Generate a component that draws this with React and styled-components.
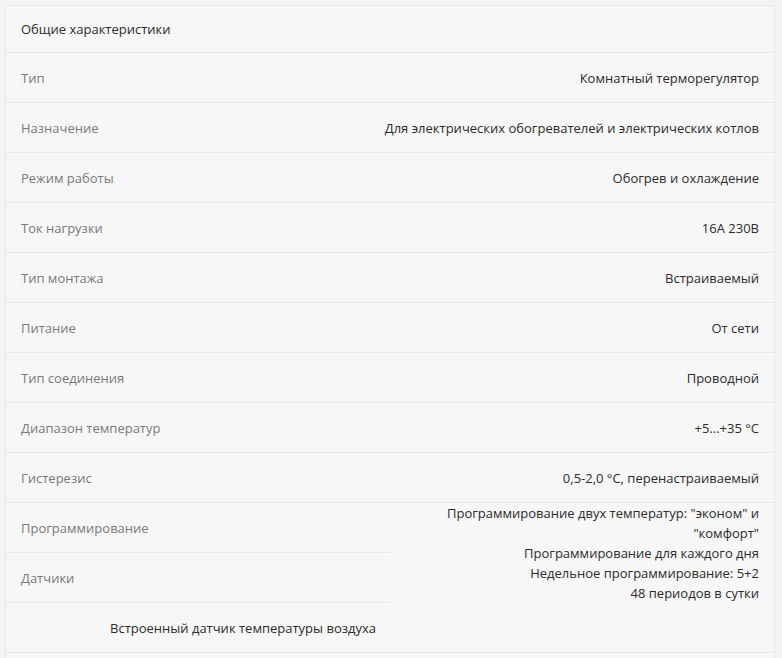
import React from 'react';
import styled, { createGlobalStyle } from 'styled-components';

const GlobalStyle = createGlobalStyle`
  body {
    margin: 0;
    background: #f4f4f4;
    font-family: "Open Sans", "Noto Sans", sans-serif;
    font-size: 13px;
    color: #333;
  }
`;

const Page = styled.div`
  padding: 5px 7px 0 5px;
`;

const Card = styled.section`
  background: #f7f7f7;
  border: 1px solid #e8e8e8;
  border-bottom: none;
`;

const Header = styled.h3`
  margin: 0;
  height: 46px;
  display: flex;
  align-items: center;
  padding: 0 15px;
  font-size: 13px;
  font-weight: 400;
  color: #2b2b2b;
  border-bottom: 1px solid #e8e8e8;
`;

const Row = styled.div`
  height: 49px;
  display: flex;
  align-items: center;
  justify-content: ${p => (p.$alignEnd ? 'flex-end' : 'space-between')};
  padding: 0 15px;
  border-bottom: 1px solid #e8e8e8;
`;

const Label = styled.span`
  color: #7a7a7a;
`;

const Value = styled.span`
  color: #2b2b2b;
  text-align: right;
`;

const Split = styled.div`
  display: grid;
  grid-template-columns: 385px 1fr;
  border-bottom: 1px solid #e8e8e8;
`;

const SplitRow = styled(Row)`
  &:last-child {
    border-bottom: none;
  }
`;

const ValueList = styled.ul`
  list-style: none;
  margin: 0;
  padding: 0 15px 0 0;
  justify-self: end;
  width: 322px;
  text-align: right;
  color: #2b2b2b;
  line-height: 20px;
`;

const specs = [
  ['Тип', 'Комнатный терморегулятор'],
  ['Назначение', 'Для электрических обогревателей и электрических котлов'],
  ['Режим работы', 'Обогрев и охлаждение'],
  ['Ток нагрузки', '16А 230В'],
  ['Тип монтажа', 'Встраиваемый'],
  ['Питание', 'От сети'],
  ['Тип соединения', 'Проводной'],
  ['Диапазон температур', '+5...+35 °С'],
  ['Гистерезис', '0,5-2,0 °С, перенастраиваемый'],
];

const programming = [
  'Программирование двух температур: "эконом" и "комфорт"',
  'Программирование для каждого дня',
  'Недельное программирование: 5+2',
  '48 периодов в сутки',
];

export default function App() {
  return (
    <Page>
      <GlobalStyle />
      <Card>
        <Header>Общие характеристики</Header>
        {specs.map(([label, value]) => (
          <Row key={label}>
            <Label>{label}</Label>
            <Value>{value}</Value>
          </Row>
        ))}
        <Split>
          <div>
            <SplitRow>
              <Label>Программирование</Label>
            </SplitRow>
            <SplitRow>
              <Label>Датчики</Label>
            </SplitRow>
            <SplitRow $alignEnd>
              <Value>Встроенный датчик температуры воздуха</Value>
            </SplitRow>
          </div>
          <ValueList>
            {programming.map(line => (
              <li key={line}>{line}</li>
            ))}
          </ValueList>
        </Split>
        <Row />
      </Card>
    </Page>
  );
}
